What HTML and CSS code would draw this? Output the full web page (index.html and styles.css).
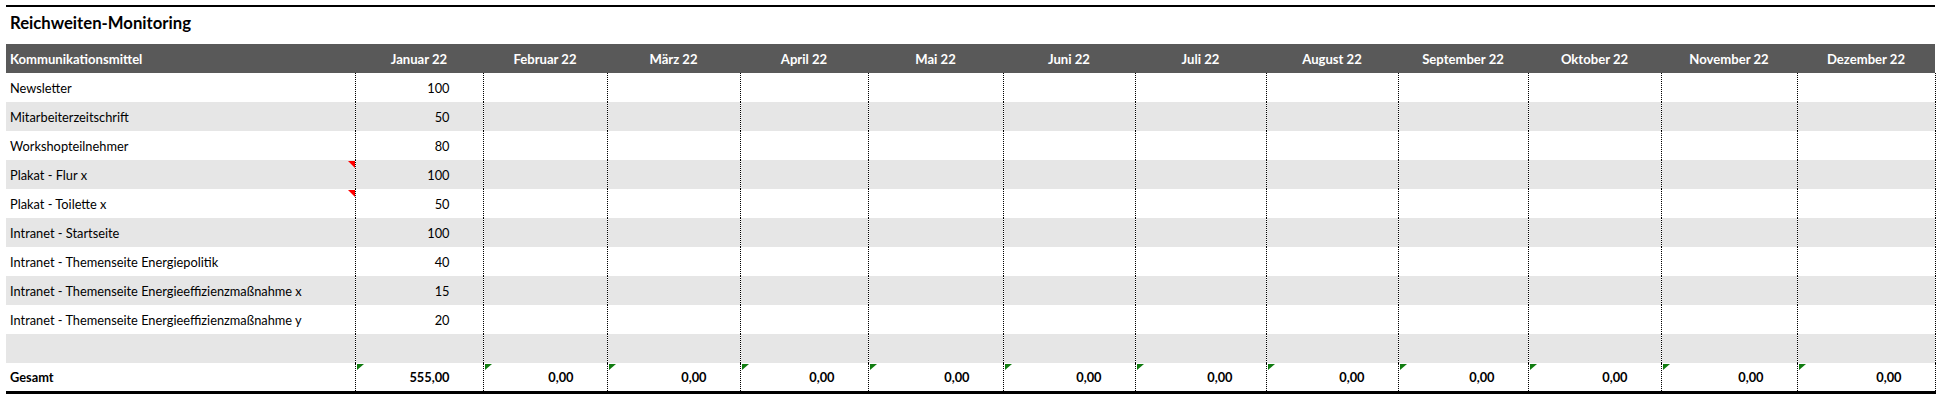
FILE: index.html
```html
<!DOCTYPE html>
<html lang="de">
<head>
<meta charset="utf-8">
<title>Reichweiten-Monitoring</title>
<link rel="stylesheet" href="styles.css">
</head>
<body>
<div class="sheet">
  <div class="topline"></div>
  <div class="title">Reichweiten-Monitoring</div>
  <table class="grid">
    <thead>
      <tr>
        <th class="name">Kommunikationsmittel</th>
        <th>Januar 22</th><th>Februar 22</th><th>März 22</th><th>April 22</th>
        <th>Mai 22</th><th>Juni 22</th><th>Juli 22</th><th>August 22</th>
        <th>September 22</th><th>Oktober 22</th><th>November 22</th><th>Dezember 22</th>
      </tr>
    </thead>
    <tbody>
      <tr><td class="name">Newsletter</td><td>100</td><td></td><td></td><td></td><td></td><td></td><td></td><td></td><td></td><td></td><td></td><td></td></tr>
      <tr class="alt"><td class="name">Mitarbeiterzeitschrift</td><td>50</td><td></td><td></td><td></td><td></td><td></td><td></td><td></td><td></td><td></td><td></td><td></td></tr>
      <tr><td class="name">Workshopteilnehmer</td><td>80</td><td></td><td></td><td></td><td></td><td></td><td></td><td></td><td></td><td></td><td></td><td></td></tr>
      <tr class="alt"><td class="name note">Plakat - Flur x</td><td>100</td><td></td><td></td><td></td><td></td><td></td><td></td><td></td><td></td><td></td><td></td><td></td></tr>
      <tr><td class="name note">Plakat - Toilette x</td><td>50</td><td></td><td></td><td></td><td></td><td></td><td></td><td></td><td></td><td></td><td></td><td></td></tr>
      <tr class="alt"><td class="name">Intranet - Startseite</td><td>100</td><td></td><td></td><td></td><td></td><td></td><td></td><td></td><td></td><td></td><td></td><td></td></tr>
      <tr><td class="name">Intranet - Themenseite Energiepolitik</td><td>40</td><td></td><td></td><td></td><td></td><td></td><td></td><td></td><td></td><td></td><td></td><td></td></tr>
      <tr class="alt"><td class="name">Intranet - Themenseite Energieeffizienzmaßnahme x</td><td>15</td><td></td><td></td><td></td><td></td><td></td><td></td><td></td><td></td><td></td><td></td><td></td></tr>
      <tr><td class="name">Intranet - Themenseite Energieeffizienzmaßnahme y</td><td>20</td><td></td><td></td><td></td><td></td><td></td><td></td><td></td><td></td><td></td><td></td><td></td></tr>
      <tr class="alt"><td class="name"></td><td></td><td></td><td></td><td></td><td></td><td></td><td></td><td></td><td></td><td></td><td></td><td></td></tr>
      <tr class="total"><td class="name">Gesamt</td><td class="err">555,00</td><td class="err">0,00</td><td class="err">0,00</td><td class="err">0,00</td><td class="err">0,00</td><td class="err">0,00</td><td class="err">0,00</td><td class="err">0,00</td><td class="err">0,00</td><td class="err">0,00</td><td class="err">0,00</td><td class="err">0,00</td></tr>
    </tbody>
  </table>
</div>
</body>
</html>
```

FILE: styles.css
```css
html, body {
  margin: 0;
  padding: 0;
  background: #ffffff;
}
body {
  font-family: Lato, "Liberation Sans", sans-serif;
  color: #000;
}
.sheet {
  margin-left: 6px;
  width: 1929px;
}
.topline {
  margin-top: 5px;
  height: 2px;
  background: #000;
}
.title {
  height: 37px;
  padding-left: 4px;
  font-weight: 700;
  font-size: 16.7px;
  line-height: 32px;
}
.grid {
  border-collapse: collapse;
  table-layout: fixed;
  width: 1929px;
  font-size: 12.8px;
}
.grid th {
  height: 29px;
  padding: 0;
  background: #595959;
  color: #fff;
  font-weight: 700;
  font-size: 13.1px;
  text-align: center;
}
.grid th.name {
  text-align: left;
  padding-left: 4px;
}
.grid td {
  height: 29px;
  padding: 0 33px 0 0;
  text-align: right;
  border-left: 1px dotted #000;
  position: relative;
}
.grid td:last-child {
  border-right: 1px dotted #000;
}
.grid td.name {
  text-align: left;
  padding: 0 0 0 4px;
  border-left: none;
}
.grid tr.alt td {
  background: #e6e6e6;
}
.grid tr.total td {
  height: 28px;
  font-weight: 700;
  border-bottom: 3px solid #000;
}

.grid th:nth-child(1) { width: 345px; }
.grid th:nth-child(2) { width: 128px; }
.grid th:nth-child(3) { width: 124px; }
.grid th:nth-child(4) { width: 133px; }
.grid th:nth-child(5) { width: 128px; }
.grid th:nth-child(6) { width: 135px; }
.grid th:nth-child(7) { width: 132px; }
.grid th:nth-child(8) { width: 131px; }
.grid th:nth-child(9) { width: 132px; }
.grid th:nth-child(10) { width: 130px; }
.grid th:nth-child(11) { width: 133px; }
.grid th:nth-child(12) { width: 136px; }
.grid th:nth-child(13) { width: 138px; }

.note::after {
  content: "";
  position: absolute;
  top: 1px;
  right: 0;
  width: 0;
  height: 0;
  border-top: 7px solid #ff0000;
  border-left: 7px solid transparent;
}
.err::before {
  content: "";
  position: absolute;
  top: 1px;
  left: 1px;
  width: 0;
  height: 0;
  border-top: 6px solid #107c10;
  border-right: 7px solid transparent;
}
```
